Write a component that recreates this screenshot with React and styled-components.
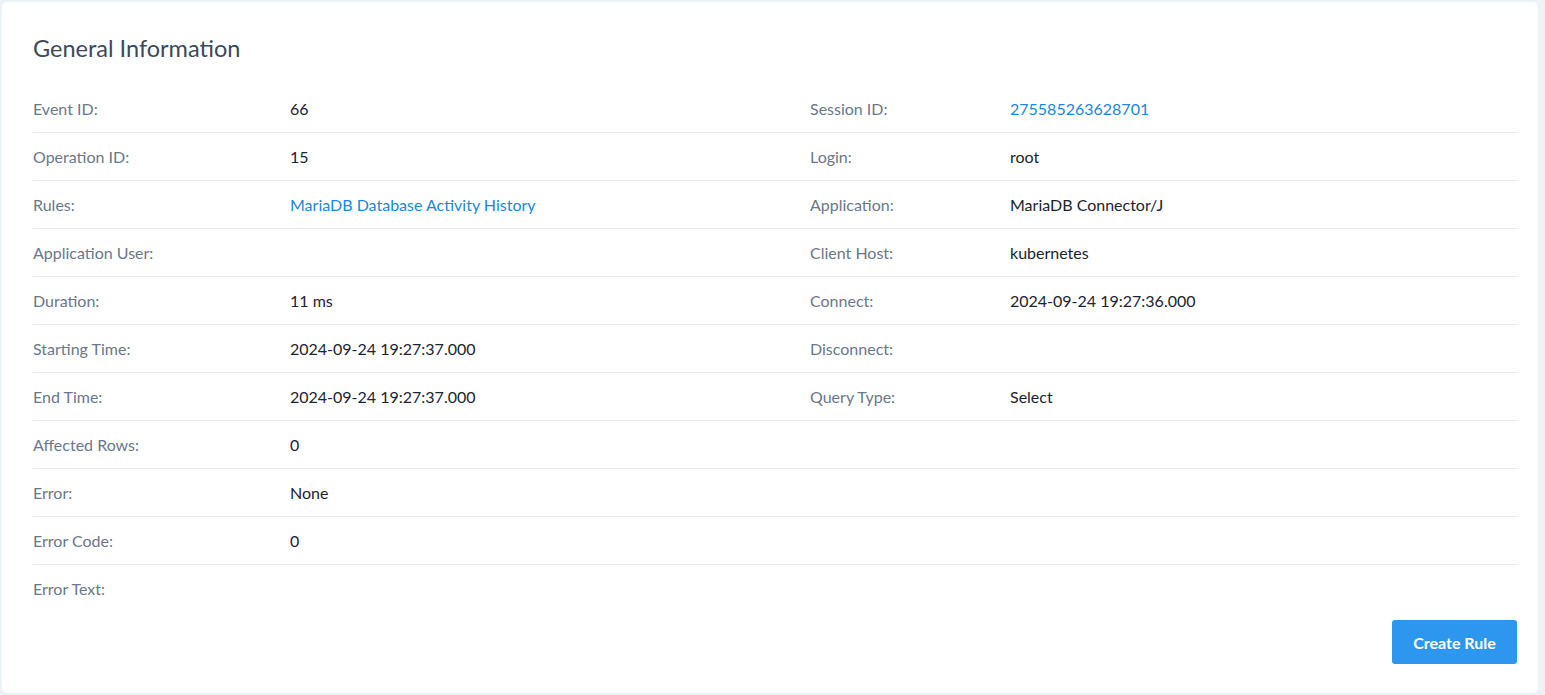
import React from "react";
import styled, { createGlobalStyle } from "styled-components";

const GlobalStyle = createGlobalStyle`
  body {
    margin: 0;
    background: #eef1f5;
    font-family: Lato, "Noto Sans", sans-serif;
  }
`;

const Page = styled.div`
  padding: 2px 7px 2px 2px;
`;

const Card = styled.div`
  background: #fff;
  border-radius: 5px;
  padding: 30px 21px 29px 31px;
  display: flex;
  flex-direction: column;
`;

const Title = styled.h2`
  margin: 0 0 21px;
  font-size: 23.5px;
  line-height: 32px;
  font-weight: 400;
  color: #3c4a5b;
`;

const Grid = styled.div`
  display: grid;
  grid-template-columns: 257px 520px 200px 1fr;
`;

const Cell = styled.div`
  height: 47px;
  display: flex;
  align-items: center;
  font-size: 16px;
  color: ${({ $label }) => ($label ? "#6b778a" : "#1c2430")};
  border-bottom: ${({ $last }) => ($last ? "none" : "1px solid #e5e8ee")};
  padding-bottom: ${({ $last }) => ($last ? "1px" : "0")};
`;

const Link = styled.a`
  color: #1a87dc;
  text-decoration: none;
  cursor: pointer;
`;

const Footer = styled.div`
  display: flex;
  justify-content: flex-end;
  margin-top: 7px;
`;

const Button = styled.button`
  width: 125px;
  height: 44px;
  border: none;
  border-radius: 3px;
  background: #2d97f0;
  color: #fff;
  font-family: Lato, "Noto Sans", sans-serif;
  font-weight: 700;
  font-size: 16px;
  cursor: pointer;
`;

const rows = [
  ["Event ID:", "66", "Session ID:", <Link key="s">275585263628701</Link>],
  ["Operation ID:", "15", "Login:", "root"],
  ["Rules:", <Link key="r">MariaDB Database Activity History</Link>, "Application:", "MariaDB Connector/J"],
  ["Application User:", "", "Client Host:", "kubernetes"],
  ["Duration:", "11 ms", "Connect:", "2024-09-24 19:27:36.000"],
  ["Starting Time:", "2024-09-24 19:27:37.000", "Disconnect:", ""],
  ["End Time:", "2024-09-24 19:27:37.000", "Query Type:", "Select"],
  ["Affected Rows:", "0", "", ""],
  ["Error:", "None", "", ""],
  ["Error Code:", "0", "", ""],
  ["Error Text:", "", "", ""],
];

const App = () => (
  <>
    <GlobalStyle />
    <Page>
      <Card>
        <Title>General Information</Title>
        <Grid>
          {rows.map((row, i) =>
            row.map((value, j) => (
              <Cell key={`${i}-${j}`} $label={j % 2 === 0} $last={i === rows.length - 1}>
                {value}
              </Cell>
            ))
          )}
        </Grid>
        <Footer>
          <Button>Create Rule</Button>
        </Footer>
      </Card>
    </Page>
  </>
);

export default App;
